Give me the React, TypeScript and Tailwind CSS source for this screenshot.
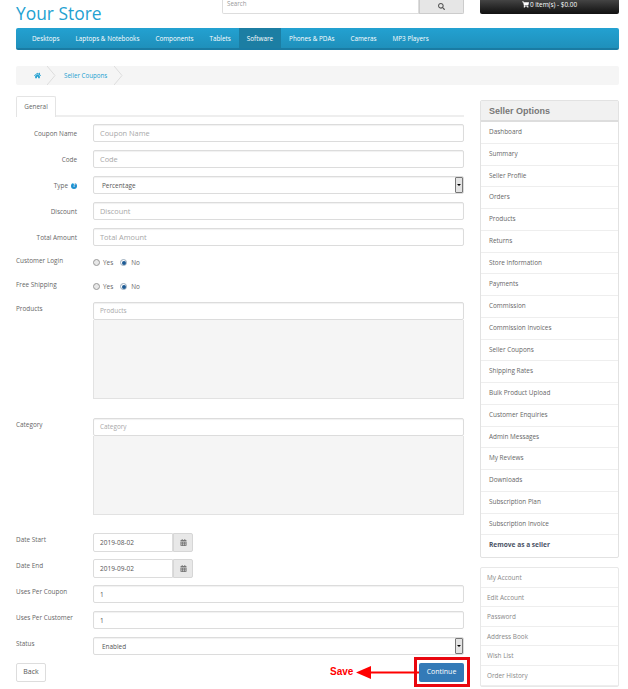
import { FaHome, FaSearch, FaShoppingCart, FaCalendarAlt } from "react-icons/fa"

const navItems = ["Desktops", "Laptops & Notebooks", "Components", "Tablets", "Software", "Phones & PDAs", "Cameras", "MP3 Players"]
const sellerLinks = [
  "Dashboard", "Summary", "Seller Profile", "Orders", "Products", "Returns", "Store Information", "Payments",
  "Commission", "Commission Invoices", "Seller Coupons", "Shipping Rates", "Bulk Product Upload", "Customer Enquiries",
  "Admin Messages", "My Reviews", "Downloads", "Subscription Plan", "Subscription Invoice",
]
const accountLinks = ["My Account", "Edit Account", "Password", "Address Book", "Wish List", "Order History"]

const boxClass = "h-[18px] rounded-[2px] border border-[#dcdcdc] bg-white shadow-[inset_0_1px_1px_rgba(0,0,0,0.06)]"

function TextRow({ label, placeholder }: { label: string; placeholder: string }) {
  return (
    <div className="flex h-[26px] items-start">
      <label className="w-[61px] pt-[5px] text-right text-[6.4px] text-[#666]">{label}</label>
      <div className={`ml-[16px] w-[371px] px-[6px] text-[7.4px] leading-[16px] text-[#a8a8a8] ${boxClass}`}>{placeholder}</div>
    </div>
  )
}

function SelectBox({ value, labelText }: { value: string; labelText: React.ReactNode }) {
  return (
    <div className="flex h-[26px] items-start">
      {labelText}
      <div className={`relative w-[371px] pl-[8px] text-[6.4px] leading-[17px] text-[#555] ${boxClass}`}>
        {value}
        <span className="absolute right-0 top-0 flex h-[16px] w-[8px] items-center justify-center rounded-[1px] border border-[#777] bg-[#e4e4e4]">
          <span className="border-x-[2px] border-t-[2px] border-x-transparent border-t-black" />
        </span>
      </div>
    </div>
  )
}

function RadioRow({ label }: { label: string }) {
  return (
    <div className="flex h-[24px] items-start">
      <label className="w-[77px] pt-[2px] text-[6.4px] text-[#666]">{label}</label>
      <div className="flex items-center pt-[4px] text-[6.4px] text-[#666]">
        <span className="h-[7px] w-[7px] rounded-full border border-[#999] bg-[#e8e8e8]" />
        <span className="ml-[3px]">Yes</span>
        <span className="ml-[7px] flex h-[7px] w-[7px] items-center justify-center rounded-full border border-[#9ab] bg-white">
          <span className="h-[4px] w-[4px] rounded-full bg-[#1c5a94]" />
        </span>
        <span className="ml-[4px]">No</span>
      </div>
    </div>
  )
}

function PickerRow({ label }: { label: string }) {
  return (
    <div className="flex h-[115.5px] items-start">
      <label className="w-[77px] pt-[2px] text-[6.4px] text-[#666]">{label}</label>
      <div className="w-[371px]">
        <div className={`px-[6px] text-[6.4px] leading-[16px] text-[#a8a8a8] ${boxClass}`}>{label}</div>
        <div className="h-[79px] border-x border-b border-[#e2e2e2] bg-[#f5f5f5]" />
      </div>
    </div>
  )
}

function DateRow({ label, value }: { label: string; value: string }) {
  return (
    <div className="flex h-[26px] items-start">
      <label className="w-[77px] pt-[2px] text-[6.4px] text-[#666]">{label}</label>
      <div className="flex h-[19px] w-[100px]">
        <div className="w-[80px] rounded-l-[2px] border border-[#dcdcdc] px-[6px] text-[6.5px] leading-[17px] text-[#555]">{value}</div>
        <div className="flex w-[20px] items-center justify-center rounded-r-[2px] border border-[#d6d6d6] bg-[#e8e8e8]">
          <FaCalendarAlt className="h-[7px] w-[7px] text-[#777]" />
        </div>
      </div>
    </div>
  )
}

function ValueRow({ label, value }: { label: string; value: string }) {
  return (
    <div className="flex h-[26px] items-start">
      <label className="w-[77px] pt-[2px] text-[6.4px] text-[#666]">{label}</label>
      <div className={`w-[371px] px-[6px] text-[6.5px] leading-[17px] text-[#555] ${boxClass}`}>{value}</div>
    </div>
  )
}

export default function App() {
  return (
    <div className="h-[689px] w-[628px] overflow-hidden bg-white pl-[16px] pr-[9px] font-['Open_Sans',sans-serif]">
      {/* header is cropped by the top of the window */}
      <header className="flex h-[28px] items-start">
        <div className="w-[206px] pt-[1px] text-[17.4px] leading-[25px] text-[#23a1d1]">Your Store</div>
        <div className="flex h-[14px] w-[242px]">
          <div className="w-[197px] rounded-bl-[2px] border-x border-b border-[#ddd] px-[4px] text-[6.2px] leading-[8px] text-[#999]">Search</div>
          <div className="flex w-[45px] items-center justify-center rounded-br-[2px] border border-t-0 border-[#ccc] bg-[#e6e6e6]">
            <FaSearch className="h-[7px] w-[7px] text-[#555]" />
          </div>
        </div>
        <div className="ml-[16px] flex h-[14px] w-[139px] items-start justify-center rounded-b-[2px] bg-gradient-to-b from-[#444] to-[#111] text-[6.4px] leading-[9px] text-white">
          <FaShoppingCart className="mr-[1px] mt-[1px] h-[7px] w-[7px]" />
          0 item(s) - $0.00
        </div>
      </header>

      <nav className="flex h-[22px] rounded-[2px] border-b-2 border-[#1a7ba3] bg-gradient-to-b from-[#23a1d1] to-[#1f90bb] pl-[8px] text-[6.35px] leading-[21px] text-white">
        {navItems.map((item) => (
          <span key={item} className={item === "Software" ? "bg-[#1c7ea3] px-[8px]" : "px-[8px]"}>{item}</span>
        ))}
      </nav>

      <div className="mt-[16px] flex h-[19px] items-center rounded-[2px] bg-[#f5f5f5] text-[6.2px] text-[#23a1d1]">
        <FaHome className="ml-[18px] h-[7px] w-[7px] text-[#23a1d1]" />
        <svg className="ml-[6px] h-[19px] w-[9px]" viewBox="0 0 9 19" fill="none" stroke="#ddd">
          <path d="M0 0l8 9.5L0 19" />
        </svg>
        <span className="ml-[8px]">Seller Coupons</span>
        <svg className="ml-[7px] h-[19px] w-[9px]" viewBox="0 0 9 19" fill="none" stroke="#ddd">
          <path d="M0 0l8 9.5L0 19" />
        </svg>
      </div>

      <div className="flex items-start">
        <main className="mt-[11px] w-[448px]">
          <div className="h-[21px] border-b-2 border-[#eee]">
            <div className="h-[21px] w-[40px] rounded-t-[2px] border-x border-t border-[#e4e4e4] bg-white text-center text-[6.4px] leading-[20px] text-[#666]">General</div>
          </div>
          <div className="mt-[7px]">
            <TextRow label="Coupon Name" placeholder="Coupon Name" />
            <TextRow label="Code" placeholder="Code" />
            <SelectBox
              value="Percentage"
              labelText={
                <label className="flex w-[77px] items-center justify-end pr-[16px] pt-[5px] text-[6.4px] text-[#666]">
                  Type
                  <span className="ml-[3px] flex h-[6px] w-[6px] items-center justify-center rounded-full bg-[#1f90d0] text-[4.5px] font-bold text-white">?</span>
                </label>
              }
            />
            <TextRow label="Discount" placeholder="Discount" />
            <TextRow label="Total Amount" placeholder="Total Amount" />
            <RadioRow label="Customer Login" />
            <RadioRow label="Free Shipping" />
            <PickerRow label="Products" />
            <PickerRow label="Category" />
            <DateRow label="Date Start" value="2019-08-02" />
            <DateRow label="Date End" value="2019-09-02" />
            <ValueRow label="Uses Per Coupon" value="1" />
            <ValueRow label="Uses Per Customer" value="1" />
            <SelectBox value="Enabled" labelText={<label className="w-[77px] pt-[2px] text-[6.4px] text-[#666]">Status</label>} />
          </div>
          <div className="flex items-start justify-between">
            <button className="h-[19px] w-[30px] rounded-[2px] border border-[#ddd] bg-white text-[7px] text-[#555]">Back</button>
            <div className="relative">
              <button className="block h-[19px] w-[45px] rounded-[2px] bg-[#337ab7] text-[7px] text-white">Continue</button>
              {/* red annotation drawn over the screenshot */}
              <div className="absolute -left-[5px] -top-[6px] h-[30px] w-[56px] border-[3px] border-[#e9070f]" />
              <span className="absolute -left-[89px] top-[2px] text-[10px] font-bold leading-[14px] text-[#f00] font-['Liberation_Sans',sans-serif]">Save</span>
              <svg className="absolute -left-[63px] top-[2px] h-[15px] w-[63px]" viewBox="0 0 63 15">
                <path d="M14 6.5h49v2H14z" fill="#f00" />
                <path d="M0 7.5L15 1v13z" fill="#f00" />
              </svg>
            </div>
          </div>
        </main>

        <aside className="ml-[16px] mt-[15px] w-[139px]">
          <div className="rounded-[2px] border border-[#e2e2e2]">
            <div className="h-[21px] border-b-2 border-[#ddd] bg-[#f1f1f1] pl-[8px] text-[9px] font-bold leading-[20px] text-[#777] font-['Liberation_Sans',sans-serif]">Seller Options</div>
            {sellerLinks.map((link) => (
              <div key={link} className="h-[21.75px] border-b border-[#eee] pl-[8px] text-[6.4px] leading-[20px] text-[#666]">{link}</div>
            ))}
            <div className="h-[21.75px] pl-[8px] text-[6.6px] font-bold leading-[20px] text-[#4c5466]">Remove as a seller</div>
          </div>
          <div className="mt-[9px] rounded-[2px] border border-[#e8e8e8]">
            {accountLinks.map((link) => (
              <div key={link} className="h-[19.6px] border-b border-[#eee] pl-[6px] text-[6.4px] leading-[19px] text-[#888]">{link}</div>
            ))}
          </div>
        </aside>
      </div>
    </div>
  )
}
